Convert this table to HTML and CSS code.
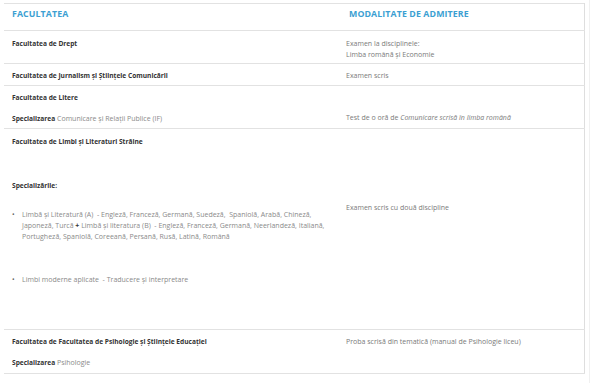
FILE: index.html
```html
<!DOCTYPE html>
<html lang="ro">
<head>
<meta charset="utf-8">
<title>Admitere</title>
<link rel="stylesheet" href="styles.css">
</head>
<body>
<div class="page">
  <table class="adm">
    <thead>
      <tr class="rh">
        <th class="h-left">FACULTATEA</th>
        <th class="h-right">MODALITATE DE ADMITERE</th>
      </tr>
    </thead>
    <tbody>
      <tr class="r1">
        <td class="left"><p class="fac">Facultatea de Drept</p></td>
        <td class="right"><p>Examen la disciplinele:</p><p>Limba română și Economie</p></td>
      </tr>
      <tr class="r2">
        <td class="left"><p class="fac">Facultatea de Jurnalism și Științele Comunicării</p></td>
        <td class="right"><p>Examen scris</p></td>
      </tr>
      <tr class="r3">
        <td class="left">
          <p class="fac">Facultatea de Litere</p>
          <p class="spec"><b>Specializarea</b> Comunicare și Relații Publice (IF)</p>
        </td>
        <td class="right bottom"><p>Test de o oră de <i>Comunicare scrisă în limba română</i></p></td>
      </tr>
      <tr class="r4">
        <td class="left">
          <p class="fac">Facultatea de Limbi și Literaturi Străine</p>
          <p class="fac specs">Specializările:</p>
          <ul class="list">
            <li>Limbă și Literatură (A)&nbsp; - Engleză, Franceză, Germană, Suedeză,&nbsp; Spaniolă, Arabă, Chineză, Japoneză, Turcă <b>+</b> Limbă și literatura (B)&nbsp; - Engleză, Franceză, Germană, Neerlandeză, Italiană, Portugheză, Spaniolă, Coreeană, Persană, Rusă, Latină, Română</li>
            <li class="second">Limbi moderne aplicate&nbsp; - Traducere și interpretare</li>
          </ul>
        </td>
        <td class="right mid"><p>Examen scris cu două discipline</p></td>
      </tr>
      <tr class="r5">
        <td class="left">
          <p class="fac">Facultatea de Facultatea de Psihologie și Științele Educației</p>
          <p class="spec"><b>Specializarea</b> Psihologie</p>
        </td>
        <td class="right"><p>Proba scrisă din tematică (manual de Psihologie liceu)</p></td>
      </tr>
    </tbody>
  </table>
</div>
</body>
</html>
```
FILE: styles.css
```css
html, body {
  margin: 0;
  padding: 0;
  background: #ffffff;
}

body {
  font-family: "Open Sans", "Liberation Sans", sans-serif;
  color: #333;
}

.page {
  box-sizing: border-box;
  width: 590px;
  min-height: 383px;
  padding: 3px 4px 0 4px;
  border-right: 1px solid #f0f0f0;
}

.adm {
  width: 581px;
  border-collapse: collapse;
  border-top: 1px solid #e2e2e2;
  border-right: 1px solid #dedede;
  table-layout: fixed;
}

.adm th,
.adm td {
  border-bottom: 1px solid #e2e2e2;
  vertical-align: top;
  text-align: left;
  padding: 0;
  box-sizing: border-box;
}

.adm th {
  font-size: 8.8px;
  font-weight: 700;
  color: #3c9fd2;
  letter-spacing: 0.1px;
  line-height: 11px;
  padding-top: 5px;
}

.h-left {
  width: 334px;
  padding-left: 8px !important;
}

.h-right {
  padding-left: 11px !important;
}

.rh { height: 27px; }
.r1 { height: 33px; }
.r2 { height: 22px; }
.r3 { height: 43px; }
.r4 { height: 201px; }
.r5 { height: 44px; }

.adm p {
  margin: 0;
  line-height: 11px;
  font-size: 7px;
}

.left,
.right {
  padding-left: 8px !important;
  padding-right: 8px !important;
}

.right p {
  color: #7a7a7a;
  font-weight: 400;
}

.adm p.fac {
  font-weight: 700;
  color: #333;
  font-size: 6.6px;
}

.spec {
  color: #8a8a8a;
  margin-top: 10px !important;
}

.spec b {
  color: #333;
  font-weight: 700;
  font-size: 6.6px;
}

.r1 td { padding-top: 7px; }
.r2 td { padding-top: 6px; }
.r3 td { padding-top: 6px; }
.r4 td { padding-top: 7px; }
.r5 td { padding-top: 6px; }

.adm .right.bottom {
  vertical-align: bottom;
  padding-top: 0;
  padding-bottom: 5px;
}

.specs {
  margin-top: 33px !important;
}

.list {
  margin: 18px 0 0 0;
  padding: 0 0 0 10px;
  list-style: none;
}

.list li {
  position: relative;
  font-size: 7px;
  line-height: 11px;
  color: #8a8a8a;
}

.list li::before {
  content: "•";
  position: absolute;
  left: -10px;
  top: 0;
  color: #666;
}

.list li b {
  color: #333;
}

.list li.second {
  margin-top: 32px;
}

.adm .right.mid {
  padding-top: 73px;
}
```
